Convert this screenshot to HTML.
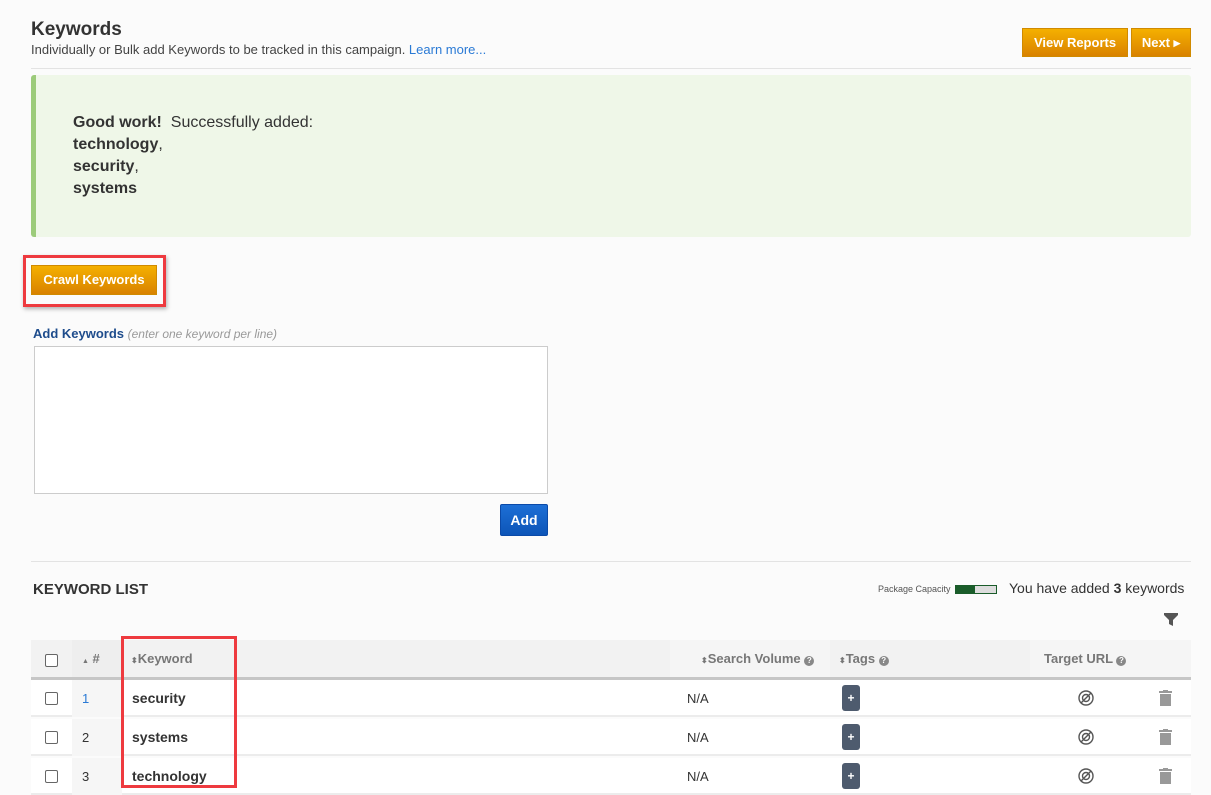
<!DOCTYPE html>
<html><head><meta charset="utf-8"><style>
*{box-sizing:border-box;margin:0;padding:0}
body{width:1211px;height:785px;overflow:hidden;background:#fbfbfb;font-family:"Liberation Sans",sans-serif;color:#333;position:relative}
.a{position:absolute;white-space:nowrap}
.ob{position:absolute;background:linear-gradient(#f5b000,#d98200);border:1px solid #d08a00;color:#fff;font-weight:bold;font-size:13px;text-align:center}
.row{position:absolute;left:31px;width:1160px;height:37px;background:#fff;border-bottom:2px solid #ececec}
.cb{position:absolute;left:14px;width:13px;height:13px;border:1px solid #666;border-radius:2px;background:#fff}
.plus{position:absolute;left:811px;width:18px;height:26px;background:#4e5b6e;border-radius:3px;color:#fff;font-size:12px;font-weight:bold;text-align:center;line-height:26px}
.n{position:absolute;left:41px;width:50px;height:37px;background:#f6f6f6}
.q{display:inline-block;width:10px;height:10px;border-radius:50%;background:#888;color:#fff;font-size:8px;line-height:10px;text-align:center;vertical-align:0px}
</style></head><body>
<div class="a" style="left:31px;top:19px;font-size:19px;font-weight:bold;color:#333">Keywords</div>
<div class="a" style="left:31px;top:42px;font-size:13px;color:#444">Individually or Bulk add Keywords to be tracked in this campaign. <span style="color:#2a7ad5">Learn more...</span></div>
<div class="ob" style="left:1022px;top:28px;width:106px;height:29px;line-height:27px">View Reports</div>
<div class="ob" style="left:1131px;top:28px;width:60px;height:29px;line-height:27px">Next ▸</div>
<div class="a" style="left:31px;top:68px;width:1160px;height:1px;background:#e3e3e3"></div>
<div class="a" style="left:31px;top:75px;width:1160px;height:162px;background:#eff7e8;border-left:5px solid #9ccb7a;border-radius:3px"></div>
<div class="a" style="left:73px;top:112px;font-size:16px;line-height:22px;color:#333"><b>Good work!</b>&nbsp; Successfully added:<br><b>technology</b>,<br><b>security</b>,<br><b>systems</b></div>
<div class="a" style="left:23px;top:255px;width:143px;height:52px;border:3px solid #ee3a3f;box-shadow:1px 2px 4px rgba(0,0,0,.3)"></div>
<div class="ob" style="left:31px;top:265px;width:126px;height:30px;line-height:28px">Crawl Keywords</div>
<div class="a" style="left:33px;top:326px;font-size:13px"><b style="color:#1e4c8c">Add Keywords</b> <i style="color:#999;font-size:12px">(enter one keyword per line)</i></div>
<div class="a" style="left:34px;top:346px;width:514px;height:148px;border:1px solid #ccc;background:#fff"></div>
<div class="a" style="left:500px;top:504px;width:48px;height:32px;background:linear-gradient(#1d6fd6,#0d55b8);border:1px solid #0b4aa8;border-radius:2px;color:#fff;font-weight:bold;font-size:14px;text-align:center;line-height:30px">Add</div>
<div class="a" style="left:31px;top:561px;width:1160px;height:1px;background:#e3e3e3"></div>
<div class="a" style="left:33px;top:581px;font-size:15px;font-weight:bold;color:#333">KEYWORD LIST</div>
<div class="a" style="left:878px;top:584px;font-size:9px;color:#555">Package Capacity</div>
<div class="a" style="left:955px;top:585px;width:42px;height:9px;border:1px solid #1a5c2a;background:#ddd"><div style="width:19px;height:7px;background:#1a5c2a"></div></div>
<div class="a" style="left:1009px;top:580px;font-size:14px;color:#333">You have added <b>3</b> keywords</div>
<svg class="a" style="left:1164px;top:613px" width="14" height="13" viewBox="0 0 14 13"><path d="M0 0h14v2L9 7v6L5 11V7L0 2z" fill="#555"/></svg>
<div class="a" style="left:31px;top:640px;width:1160px;height:40px;background:#f2f2f2;border-bottom:3px solid #c6c6c6"></div>
<div class="a" style="left:72px;top:640px;width:50px;height:37px;background:#eeeeee"></div>
<div class="a" style="left:670px;top:640px;width:160px;height:37px;background:#f5f5f5"></div>
<div class="a" style="left:1030px;top:640px;width:161px;height:37px;background:#f5f5f5"></div>
<div class="cb" style="left:45px;top:654px"></div>
<div class="a" style="left:82px;top:651px;font-size:13px;color:#777;font-weight:bold"><span style="font-size:7px">▲</span> #</div>
<div class="a" style="left:131px;top:651px;font-size:13px;color:#777;font-weight:bold"><span style="font-size:8px">⬍</span>Keyword</div>
<div class="a" style="left:701px;top:651px;font-size:13px;color:#777;font-weight:bold"><span style="font-size:8px">⬍</span>Search Volume <span class="q">?</span></div>
<div class="a" style="left:839px;top:651px;font-size:13px;color:#777;font-weight:bold"><span style="font-size:8px">⬍</span>Tags <span class="q">?</span></div>
<div class="a" style="left:1044px;top:651px;font-size:13px;color:#777;font-weight:bold">Target URL <span class="q">?</span></div>

<div class="row" style="top:680px"><div class="n"></div><div class="cb" style="top:12px"></div><div class="a" style="left:51px;top:11px;font-size:13px;color:#2a7ad5">1</div><div class="a" style="left:101px;top:10px;font-size:14px;font-weight:bold">security</div><div class="a" style="left:656px;top:11px;font-size:13px">N/A</div><div class="plus" style="top:5px">+</div></div>
<div class="row" style="top:719px"><div class="n"></div><div class="cb" style="top:12px"></div><div class="a" style="left:51px;top:11px;font-size:13px">2</div><div class="a" style="left:101px;top:10px;font-size:14px;font-weight:bold">systems</div><div class="a" style="left:656px;top:11px;font-size:13px">N/A</div><div class="plus" style="top:5px">+</div></div>
<div class="row" style="top:758px"><div class="n"></div><div class="cb" style="top:12px"></div><div class="a" style="left:51px;top:11px;font-size:13px">3</div><div class="a" style="left:101px;top:10px;font-size:14px;font-weight:bold">technology</div><div class="a" style="left:656px;top:11px;font-size:13px">N/A</div><div class="plus" style="top:5px">+</div></div>

<svg class="a" style="left:1077px;top:689px" width="18" height="96" viewBox="0 0 18 96">
<g fill="none" stroke="#555" stroke-width="1.4"><circle cx="9" cy="9" r="7"/><circle cx="9" cy="9" r="3.5"/><path d="M4 14L14 4"/>
<circle cx="9" cy="48" r="7"/><circle cx="9" cy="48" r="3.5"/><path d="M4 53L14 43"/>
<circle cx="9" cy="87" r="7"/><circle cx="9" cy="87" r="3.5"/><path d="M4 92L14 82"/></g></svg>
<svg class="a" style="left:1158px;top:690px" width="15" height="95" viewBox="0 0 15 95">
<g fill="#999"><rect x="1" y="1" width="13" height="2"/><rect x="5" y="0" width="5" height="2"/><rect x="2" y="4" width="11" height="12"/>
<rect x="1" y="40" width="13" height="2"/><rect x="5" y="39" width="5" height="2"/><rect x="2" y="43" width="11" height="12"/>
<rect x="1" y="79" width="13" height="2"/><rect x="5" y="78" width="5" height="2"/><rect x="2" y="82" width="11" height="12"/></g></svg>
<div class="a" style="left:121px;top:636px;width:116px;height:152px;border:3px solid #ee3a3f"></div>
</body></html>
